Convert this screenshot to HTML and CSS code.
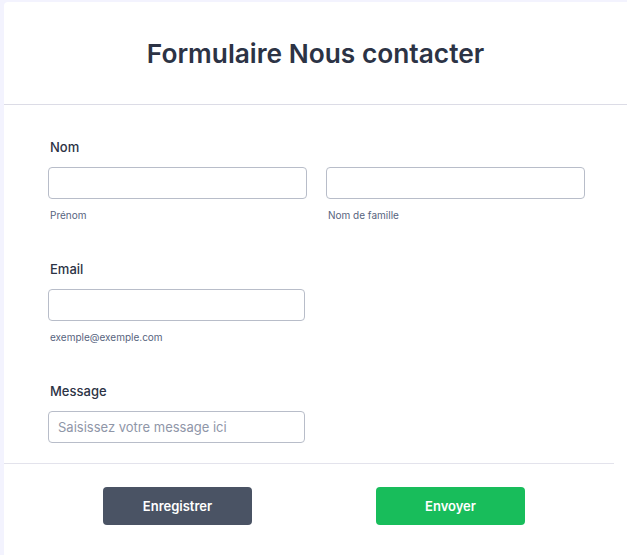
FILE: index.html
```html
<!DOCTYPE html>
<html lang="fr">
<head>
<meta charset="utf-8">
<title>Formulaire Nous contacter</title>
<link rel="stylesheet" href="styles.css">
</head>
<body>
<div class="card">
  <header class="card-header">
    <h1 class="title">Formulaire Nous contacter</h1>
  </header>
  <form class="form">
    <div class="field">
      <label class="label">Nom</label>
      <div class="row">
        <div class="col">
          <input class="input input-wide" type="text">
          <span class="sublabel">Prénom</span>
        </div>
        <div class="col">
          <input class="input input-wide" type="text">
          <span class="sublabel">Nom de famille</span>
        </div>
      </div>
    </div>
    <div class="field">
      <label class="label">Email</label>
      <input class="input" type="email">
      <span class="sublabel">exemple@exemple.com</span>
    </div>
    <div class="field field-last">
      <label class="label">Message</label>
      <input class="input" type="text" placeholder="Saisissez votre message ici">
    </div>
    <div class="footer">
      <button type="button" class="btn btn-save">Enregistrer</button>
      <button type="button" class="btn btn-send">Envoyer</button>
    </div>
  </form>
</div>
</body>
</html>
```
FILE: styles.css
```css
* { box-sizing: border-box; }
html, body { margin: 0; padding: 0; }
body {
  background: #f3f3fe;
  font-family: Inter, "Noto Sans", sans-serif;
  color: #2c3345;
  width: 627px;
  height: 555px;
  overflow: hidden;
}
.card {
  margin: 2px 0 0 4px;
  background: #fff;
  border-top-left-radius: 4px;
  height: 560px;
}
.card-header {
  height: 103px;
  border-bottom: 1px solid #dcdce6;
  display: flex;
  align-items: center;
  justify-content: center;
  padding-top: 0;
}
.title {
  margin: 0;
  font-size: 26.3px;
  font-weight: 600;
  color: #2c3345;
  letter-spacing: 0;
}
.form {
  padding: 34px 0 0 0;
}
.field {
  padding-left: 44px;
  margin-bottom: 40px;
}
.field-last { margin-bottom: 20px; }
.label {
  display: block;
  font-size: 13px;
  line-height: 16px;
  font-weight: 500;
  color: #2c3345;
  margin-bottom: 12px;
  padding-left: 2px;
}
.row {
  display: flex;
  gap: 19px;
}
.col { display: flex; flex-direction: column; }
.input {
  display: block;
  width: 257px;
  height: 32px;
  border: 1px solid #b8bdc9;
  border-radius: 4px;
  padding: 0 9px;
  font-family: Inter, "Noto Sans", sans-serif;
  font-size: 13px;
  color: #2c3345;
  background: #fff;
  outline: none;
}
.input-wide { width: 259px; }
.input::placeholder { color: #8f96a8; }
.sublabel {
  display: block;
  margin-top: 10px;
  font-size: 10px;
  line-height: 12px;
  color: #57647e;
  padding-left: 2px;
}
.footer {
  width: 610px;
  border-top: 1px solid #e3e3ec;
  display: flex;
  padding: 23px 0 0 99px;
  gap: 124px;
}
.btn {
  width: 149px;
  height: 38px;
  border: none;
  border-radius: 4px;
  color: #fff;
  font-family: Inter, "Noto Sans", sans-serif;
  font-size: 13px;
  font-weight: 600;
  cursor: pointer;
}
.btn-save { background: #4a5364; }
.btn-send { background: #18bd5b; }
```
